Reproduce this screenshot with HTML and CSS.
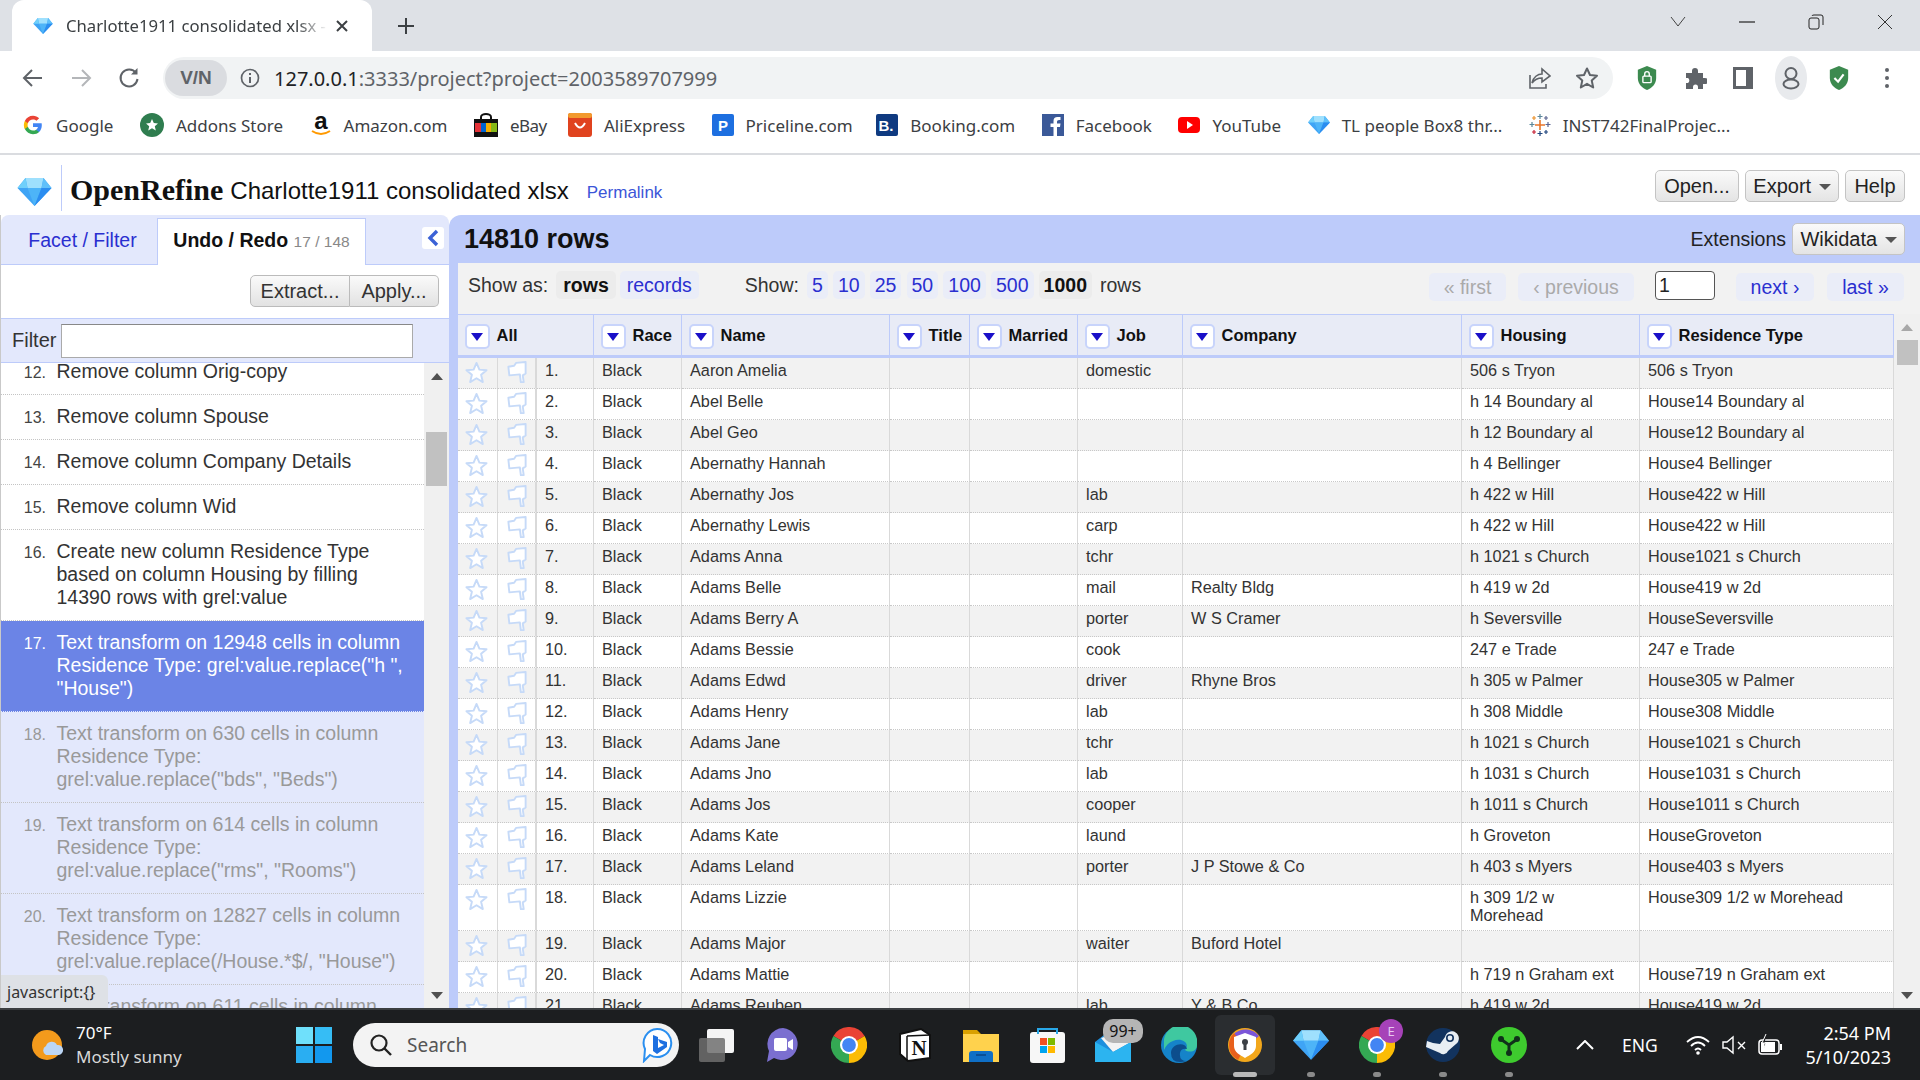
FILE: index.html
```html
<!DOCTYPE html>
<html lang="en">
<head>
<meta charset="utf-8">
<title>Charlotte1911 consolidated xlsx - OpenRefine</title>
<link rel="stylesheet" href="styles.css">
</head>
<body>
<svg class="defs" width="0" height="0" aria-hidden="true">
  <symbol id="gem" viewBox="0 0 34 28">
    <polygon points="0,10 8,0 26,0 34,10 17,28" fill="#3fa4f5"/>
    <polygon points="8,0 26,0 24,10 10,10" fill="#9fe0fd"/>
    <polygon points="0,10 8,0 10,10" fill="#6fd0fb"/>
    <polygon points="34,10 26,0 24,10" fill="#5fc0fa"/>
    <polygon points="10,10 24,10 17,28" fill="#4db4f8"/>
    <polygon points="24,10 34,10 17,28" fill="#2b8df0"/>
  </symbol>
  <symbol id="star" viewBox="0 0 24 24">
    <polygon points="12,2 15,9 22.5,9.6 16.8,14.4 18.6,22 12,18 5.4,22 7.2,14.4 1.5,9.6 9,9" fill="#fff" stroke="#c6daf8" stroke-width="2" stroke-linejoin="round"/>
  </symbol>
  <symbol id="flag" viewBox="0 0 22 24">
    <path d="M2 6 L8 5 L10 2 L20 1 L20 13 L17 15 L18 22 L15 22 L14 14 L3 15 Z" fill="#fff" stroke="#c6daf8" stroke-width="2" stroke-linejoin="round"/>
  </symbol>
  <symbol id="chrome" viewBox="0 0 24 24">
    <path d="M12 12 L1.6 6 A12 12 0 0 1 22.4 6 Z" fill="#ea4335"/>
    <path d="M12 12 L1.6 6 A12 12 0 0 0 12 24 Z" fill="#34a853"/>
    <path d="M12 12 L22.4 6 A12 12 0 0 1 12 24 Z" fill="#fbbc05"/>
    <circle cx="12" cy="12" r="6" fill="#fff"/><circle cx="12" cy="12" r="4.6" fill="#4285f4"/>
  </symbol>
  <symbol id="shield" viewBox="0 0 24 28">
    <path d="M12 1 L22 5 V14 C22 21 17 25 12 27 C7 25 2 21 2 14 V5 Z" fill="#3c8a4f"/>
  </symbol>
</svg>

<div class="window">
  <header class="tabstrip">
    <div class="tab">
      <svg class="tab-gem" width="20" height="16"><use href="#gem"/></svg>
      <span class="tab-title">Charlotte1911 consolidated xlsx -</span>
      <svg class="tab-x" width="12" height="12" viewBox="0 0 12 12"><path d="M1 1 L11 11 M11 1 L1 11" stroke="#3c4043" stroke-width="2"/></svg>
    </div>
    <svg class="tab-plus" width="18" height="18" viewBox="0 0 18 18"><path d="M9 1 V17 M1 9 H17" stroke="#3c4043" stroke-width="2"/></svg>
    <div class="win-controls">
      <svg width="16" height="12" viewBox="0 0 16 12"><path d="M1 1 L8 10 L15 1" fill="none" stroke="#444" stroke-width="1"/></svg>
      <svg width="16" height="2" viewBox="0 0 16 2"><path d="M0 1 H16" stroke="#222" stroke-width="1.2"/></svg>
      <svg width="16" height="16" viewBox="0 0 16 16"><rect x="1" y="4" width="10" height="11" rx="2" fill="none" stroke="#222"/><path d="M4 2 Q4 1 6 1 H13 Q15 1 15 3 V11" fill="none" stroke="#222"/></svg>
      <svg width="16" height="16" viewBox="0 0 16 16"><path d="M1 1 L15 15 M15 1 L1 15" stroke="#333" stroke-width="1"/></svg>
    </div>
  </header>

  <nav class="toolbar">
    <svg class="nav-ico" width="22" height="20" viewBox="0 0 22 20"><path d="M20 10 H3 M10 2 L2 10 L10 18" fill="none" stroke="#5f6368" stroke-width="2"/></svg>
    <svg class="nav-ico" width="22" height="20" viewBox="0 0 22 20"><path d="M2 10 H19 M12 2 L20 10 L12 18" fill="none" stroke="#b4b6b9" stroke-width="2"/></svg>
    <svg class="nav-ico" width="22" height="22" viewBox="0 0 22 22"><path d="M18 6 A8.5 8.5 0 1 0 19.5 12" fill="none" stroke="#5f6368" stroke-width="2"/><path d="M19.5 1 V7.5 H13 Z" fill="#5f6368"/></svg>
    <div class="omnibox">
      <span class="vpn">V/N</span>
      <svg class="info" width="20" height="20" viewBox="0 0 20 20"><circle cx="10" cy="10" r="8.5" fill="none" stroke="#5f6368" stroke-width="1.7"/><path d="M10 9 V15 M10 5 V7" stroke="#5f6368" stroke-width="2"/></svg>
      <span class="url"><b class="url-host">127.0.0.1</b>:3333/project?project=2003589707999</span>
      <svg class="omni-ico" width="24" height="24" viewBox="0 0 24 24"><path d="M3 9 V22 H19 V18 M5 17 C6 11 11 8 15 8 V3 L23 10 L15 16 V12 C11 12 8 13 5 17 Z" fill="none" stroke="#5f6368" stroke-width="1.6"/></svg>
      <svg class="omni-ico" width="24" height="24" viewBox="0 0 24 24"><polygon points="12,2.5 15,9 22,9.7 16.7,14.4 18.2,21.5 12,17.8 5.8,21.5 7.3,14.4 2,9.7 9,9" fill="none" stroke="#5f6368" stroke-width="2" stroke-linejoin="round"/></svg>
    </div>
    <div class="ext-icons">
      <svg width="22" height="26" viewBox="0 0 24 28"><use href="#shield"/><rect x="7.5" y="12" width="9" height="7" rx="1" fill="none" stroke="#fff" stroke-width="1.5"/><path d="M9.5 12 V9.5 A2.5 2.5 0 0 1 14.5 9.5 V12" fill="none" stroke="#fff" stroke-width="1.5"/></svg>
      <svg width="22" height="24" viewBox="0 0 22 24"><path d="M1 7 H7 V5 A3 3 0 0 1 13 5 V7 H18 V12 H20 A3 3 0 0 1 20 18 H18 V23 H13 V21 A2.5 2.5 0 0 0 8 21 V23 H1 V17 H3 A3 3 0 0 0 3 12 H1 Z" fill="#5f6368"/></svg>
      <svg width="20" height="22" viewBox="0 0 20 22"><rect x="1.5" y="1.5" width="17" height="19" fill="none" stroke="#5f6368" stroke-width="3"/><rect x="13" y="1.5" width="5.5" height="19" fill="#5f6368"/></svg>
      <span class="profile"><svg width="18" height="24" viewBox="0 0 18 24"><circle cx="9" cy="7.5" r="5.5" fill="none" stroke="#5f6368" stroke-width="2"/><ellipse cx="9" cy="18" rx="7.5" ry="4.5" fill="none" stroke="#5f6368" stroke-width="2"/></svg></span>
      <svg width="22" height="26" viewBox="0 0 24 28"><use href="#shield"/><path d="M7 14 L11 18 L17 10" fill="none" stroke="#fff" stroke-width="2.4"/></svg>
      <svg class="dots" width="8" height="24" viewBox="0 0 8 24"><circle cx="4" cy="4" r="2" fill="#5f6368"/><circle cx="4" cy="12" r="2" fill="#5f6368"/><circle cx="4" cy="20" r="2" fill="#5f6368"/></svg>
    </div>
  </nav>

  <div class="bookmarks">
    <a class="bm bm-google"><svg width="20" height="20" viewBox="0 0 24 24"><path fill="#4285F4" d="M22.56 12.25c0-.78-.07-1.53-.2-2.25H12v4.26h5.92c-.26 1.37-1.04 2.53-2.21 3.31v2.77h3.57c2.08-1.92 3.28-4.74 3.28-8.09z"/><path fill="#34A853" d="M12 23c2.97 0 5.46-.98 7.28-2.66l-3.57-2.77c-.98.66-2.23 1.06-3.71 1.06-2.86 0-5.29-1.93-6.16-4.53H2.18v2.84C3.99 20.53 7.7 23 12 23z"/><path fill="#FBBC05" d="M5.84 14.09c-.22-.66-.35-1.36-.35-2.09s.13-1.43.35-2.09V7.07H2.18C1.43 8.55 1 10.22 1 12s.43 3.45 1.18 4.93l2.85-2.22.81-.62z"/><path fill="#EA4335" d="M12 5.38c1.62 0 3.06.56 4.21 1.64l3.15-3.15C17.45 2.09 14.97 1 12 1 7.7 1 3.99 3.47 2.18 7.07l3.66 2.84c.87-2.6 3.3-4.53 6.16-4.53z"/></svg>Google</a>
    <a class="bm"><svg width="24" height="24" viewBox="0 0 24 24"><circle cx="12" cy="12" r="12" fill="#2f7d4f"/><polygon points="12,6 13.8,10 18,10.4 14.8,13.2 15.8,17.5 12,15.2 8.2,17.5 9.2,13.2 6,10.4 10.2,10" fill="#fff"/></svg>Addons Store</a>
    <a class="bm"><svg width="22" height="24" viewBox="0 0 22 24"><text x="11" y="16" text-anchor="middle" class="amz">a</text><path d="M2 18 Q11 24 20 18" fill="none" stroke="#f90" stroke-width="2"/></svg>Amazon.com</a>
    <a class="bm bm-ebay"><svg width="24" height="24" viewBox="0 0 24 24"><path d="M7 7 V4 A5 3 0 0 1 17 4 V7" fill="none" stroke="#111" stroke-width="2"/><rect y="6" width="24" height="18" fill="#111"/><rect x="1" y="10" width="6" height="9" fill="#e53238"/><rect x="7" y="10" width="5" height="9" fill="#0064d2"/><rect x="12" y="10" width="5" height="9" fill="#f5af02"/><rect x="17" y="10" width="6" height="9" fill="#86b817"/></svg>eBay</a>
    <a class="bm"><svg width="24" height="24" viewBox="0 0 24 24"><rect width="24" height="24" rx="3" fill="#e0431f"/><rect width="24" height="5" rx="2" fill="#f29a2e"/><path d="M7 10 Q12 19 17 10" fill="none" stroke="#fff" stroke-width="2"/></svg>AliExpress</a>
    <a class="bm bm-price"><svg width="22" height="22" viewBox="0 0 22 22"><rect width="22" height="22" rx="2" fill="#1d6fe0"/><text x="11" y="17" text-anchor="middle" class="bm-letter">P</text></svg>Priceline.com</a>
    <a class="bm"><svg width="22" height="22" viewBox="0 0 22 22"><rect width="22" height="22" rx="2" fill="#0f3a80"/><text x="10" y="17" text-anchor="middle" class="bm-letter">B.</text></svg>Booking.com</a>
    <a class="bm"><svg width="22" height="22" viewBox="0 0 22 22"><rect width="22" height="22" fill="#3b5998"/><path d="M15 22 V13 H18 L18.5 9.5 H15 V7.5 Q15 6 17 6 H18.5 V3 H15.5 Q11.5 3 11.5 7 V9.5 H8.5 V13 H11.5 V22 Z" fill="#fff"/></svg>Facebook</a>
    <a class="bm"><svg width="22" height="16" viewBox="0 0 22 16"><rect width="22" height="16" rx="4" fill="#f00"/><polygon points="9,4 15,8 9,12" fill="#fff"/></svg>YouTube</a>
    <a class="bm"><svg width="22" height="18"><use href="#gem"/></svg>TL people Box8 thr...</a>
    <a class="bm"><svg width="22" height="22" viewBox="0 0 22 22"><path d="M11 6 V16 M6 11 H16" stroke="#e8762b" stroke-width="1.6"/><path d="M11 0 V5 M8.5 2.5 H13.5" stroke="#5b879b" stroke-width="1.2"/><path d="M11 17 V22 M8.5 19.5 H13.5" stroke="#1f457e" stroke-width="1.2"/><path d="M3 8 V13 M.5 10.5 H5.5" stroke="#59879b" stroke-width="1.2"/><path d="M19 8 V13 M16.5 10.5 H21.5" stroke="#5b6591" stroke-width="1.2"/><path d="M5 2 V6 M3 4 H7" stroke="#eb912b" stroke-width="1.2"/><path d="M17 2 V6 M15 4 H19" stroke="#5b6591" stroke-width="1.2"/><path d="M5 16 V20 M3 18 H7" stroke="#c72035" stroke-width="1.2"/><path d="M17 16 V20 M15 18 H19" stroke="#1f457e" stroke-width="1.2"/></svg>INST742FinalProjec...</a>
  </div>

  <div class="app-header">
    <svg class="logo" width="35" height="28"><use href="#gem"/></svg>
    <h1 class="brand">OpenRefine</h1>
    <span class="project-name">Charlotte1911 consolidated xlsx</span>
    <a class="permalink">Permalink</a>
    <div class="app-actions">
      <button class="btn btn-open">Open...</button>
      <button class="btn btn-export">Export <i class="caret"></i></button>
      <button class="btn btn-help">Help</button>
    </div>
  </div>

  <main class="workspace">
    <aside class="left">
      <div class="left-tabs">
        <a class="tab-link">Facet / Filter</a>
        <a class="tab-active">Undo / Redo <small>17 / 148</small></a>
        <span class="collapse"><svg width="12" height="18" viewBox="0 0 12 18"><path d="M10 2 L3 9 L10 16" fill="none" stroke="#3b62d6" stroke-width="3.4"/></svg></span>
      </div>
      <div class="left-actions">
        <div class="btn-group"><button class="btn-g">Extract...</button><button class="btn-g">Apply...</button></div>
      </div>
      <div class="filter-row"><label class="filter-label">Filter</label><input class="filter-input" type="text"></div>
      <div class="history-wrap">
        <ol class="history">
          <li class="h"><span class="n">12.</span><span class="t">Remove column Orig-copy</span></li>
          <li class="h"><span class="n">13.</span><span class="t">Remove column Spouse</span></li>
          <li class="h"><span class="n">14.</span><span class="t">Remove column Company Details</span></li>
          <li class="h"><span class="n">15.</span><span class="t">Remove column Wid</span></li>
          <li class="h"><span class="n">16.</span><span class="t">Create new column Residence Type based on column Housing by filling 14390 rows with grel:value</span></li>
          <li class="h h-now"><span class="n">17.</span><span class="t">Text transform on 12948 cells in column Residence Type: grel:value.replace("h ", "House")</span></li>
          <li class="h h-redo"><span class="n">18.</span><span class="t">Text transform on 630 cells in column Residence Type: grel:value.replace("bds", "Beds")</span></li>
          <li class="h h-redo"><span class="n">19.</span><span class="t">Text transform on 614 cells in column Residence Type: grel:value.replace("rms", "Rooms")</span></li>
          <li class="h h-redo"><span class="n">20.</span><span class="t">Text transform on 12827 cells in column Residence Type: grel:value.replace(/House.*$/, "House")</span></li>
          <li class="h h-redo"><span class="n">21.</span><span class="t">Text transform on 611 cells in column Residence Type</span></li>
        </ol>
        <div class="vscroll vscroll-left"><i class="arrow-up"></i><i class="thumb thumb-left"></i><i class="arrow-down"></i></div>
      </div>
      <div class="status-bubble">javascript:{}</div>
    </aside>

    <section class="right">
      <div class="summary">
        <h2 class="rows-count">14810 rows</h2>
        <span class="ext-label">Extensions</span>
        <button class="btn btn-wiki">Wikidata <i class="caret"></i></button>
      </div>
      <div class="content">
        <div class="controls">
          <span class="ctl-label">Show as:</span>
          <span class="pill pill-on">rows</span>
          <a class="pill">records</a>
          <span class="ctl-label ctl-show">Show:</span>
          <a class="pill pill-n">5</a><a class="pill pill-n">10</a><a class="pill pill-n">25</a><a class="pill pill-n">50</a><a class="pill pill-n">100</a><a class="pill pill-n">500</a><span class="pill pill-n pill-on">1000</span>
          <span class="ctl-label ctl-rows">rows</span>
          <a class="page page-off page-first">« first</a>
          <a class="page page-off page-prev">‹ previous</a>
          <input class="page-input" type="text" value="1">
          <a class="page page-next">next ›</a>
          <a class="page page-last">last »</a>
        </div>
        <div class="grid-wrap">
          <table class="grid">
            <colgroup><col class="c-star"><col class="c-flag"><col class="c-num"><col class="c-race"><col class="c-name"><col class="c-title"><col class="c-mar"><col class="c-job"><col class="c-co"><col class="c-hou"><col class="c-res"></colgroup>
            <thead><tr>
              <th colspan="3"><i class="dd"></i>All</th>
              <th><i class="dd"></i>Race</th><th><i class="dd"></i>Name</th><th><i class="dd"></i>Title</th><th><i class="dd"></i>Married</th><th><i class="dd"></i>Job</th><th><i class="dd"></i>Company</th><th><i class="dd"></i>Housing</th><th><i class="dd"></i>Residence Type</th>
            </tr></thead>
            <tbody>
              <tr><td class="ic"><svg class="star"><use href="#star"/></svg></td><td class="ic ic2"><svg class="flag"><use href="#flag"/></svg></td><td>1.</td><td>Black</td><td>Aaron Amelia</td><td></td><td></td><td>domestic</td><td></td><td class="hou">506 s Tryon</td><td>506 s Tryon</td></tr>
              <tr><td class="ic"><svg class="star"><use href="#star"/></svg></td><td class="ic ic2"><svg class="flag"><use href="#flag"/></svg></td><td>2.</td><td>Black</td><td>Abel Belle</td><td></td><td></td><td></td><td></td><td class="hou">h 14 Boundary al</td><td>House14 Boundary al</td></tr>
              <tr><td class="ic"><svg class="star"><use href="#star"/></svg></td><td class="ic ic2"><svg class="flag"><use href="#flag"/></svg></td><td>3.</td><td>Black</td><td>Abel Geo</td><td></td><td></td><td></td><td></td><td class="hou">h 12 Boundary al</td><td>House12 Boundary al</td></tr>
              <tr><td class="ic"><svg class="star"><use href="#star"/></svg></td><td class="ic ic2"><svg class="flag"><use href="#flag"/></svg></td><td>4.</td><td>Black</td><td>Abernathy Hannah</td><td></td><td></td><td></td><td></td><td class="hou">h 4 Bellinger</td><td>House4 Bellinger</td></tr>
              <tr><td class="ic"><svg class="star"><use href="#star"/></svg></td><td class="ic ic2"><svg class="flag"><use href="#flag"/></svg></td><td>5.</td><td>Black</td><td>Abernathy Jos</td><td></td><td></td><td>lab</td><td></td><td class="hou">h 422 w Hill</td><td>House422 w Hill</td></tr>
              <tr><td class="ic"><svg class="star"><use href="#star"/></svg></td><td class="ic ic2"><svg class="flag"><use href="#flag"/></svg></td><td>6.</td><td>Black</td><td>Abernathy Lewis</td><td></td><td></td><td>carp</td><td></td><td class="hou">h 422 w Hill</td><td>House422 w Hill</td></tr>
              <tr><td class="ic"><svg class="star"><use href="#star"/></svg></td><td class="ic ic2"><svg class="flag"><use href="#flag"/></svg></td><td>7.</td><td>Black</td><td>Adams Anna</td><td></td><td></td><td>tchr</td><td></td><td class="hou">h 1021 s Church</td><td>House1021 s Church</td></tr>
              <tr><td class="ic"><svg class="star"><use href="#star"/></svg></td><td class="ic ic2"><svg class="flag"><use href="#flag"/></svg></td><td>8.</td><td>Black</td><td>Adams Belle</td><td></td><td></td><td>mail</td><td>Realty Bldg</td><td class="hou">h 419 w 2d</td><td>House419 w 2d</td></tr>
              <tr><td class="ic"><svg class="star"><use href="#star"/></svg></td><td class="ic ic2"><svg class="flag"><use href="#flag"/></svg></td><td>9.</td><td>Black</td><td>Adams Berry A</td><td></td><td></td><td>porter</td><td>W S Cramer</td><td class="hou">h Seversville</td><td>HouseSeversville</td></tr>
              <tr><td class="ic"><svg class="star"><use href="#star"/></svg></td><td class="ic ic2"><svg class="flag"><use href="#flag"/></svg></td><td>10.</td><td>Black</td><td>Adams Bessie</td><td></td><td></td><td>cook</td><td></td><td class="hou">247 e Trade</td><td>247 e Trade</td></tr>
              <tr><td class="ic"><svg class="star"><use href="#star"/></svg></td><td class="ic ic2"><svg class="flag"><use href="#flag"/></svg></td><td>11.</td><td>Black</td><td>Adams Edwd</td><td></td><td></td><td>driver</td><td>Rhyne Bros</td><td class="hou">h 305 w Palmer</td><td>House305 w Palmer</td></tr>
              <tr><td class="ic"><svg class="star"><use href="#star"/></svg></td><td class="ic ic2"><svg class="flag"><use href="#flag"/></svg></td><td>12.</td><td>Black</td><td>Adams Henry</td><td></td><td></td><td>lab</td><td></td><td class="hou">h 308 Middle</td><td>House308 Middle</td></tr>
              <tr><td class="ic"><svg class="star"><use href="#star"/></svg></td><td class="ic ic2"><svg class="flag"><use href="#flag"/></svg></td><td>13.</td><td>Black</td><td>Adams Jane</td><td></td><td></td><td>tchr</td><td></td><td class="hou">h 1021 s Church</td><td>House1021 s Church</td></tr>
              <tr><td class="ic"><svg class="star"><use href="#star"/></svg></td><td class="ic ic2"><svg class="flag"><use href="#flag"/></svg></td><td>14.</td><td>Black</td><td>Adams Jno</td><td></td><td></td><td>lab</td><td></td><td class="hou">h 1031 s Church</td><td>House1031 s Church</td></tr>
              <tr><td class="ic"><svg class="star"><use href="#star"/></svg></td><td class="ic ic2"><svg class="flag"><use href="#flag"/></svg></td><td>15.</td><td>Black</td><td>Adams Jos</td><td></td><td></td><td>cooper</td><td></td><td class="hou">h 1011 s Church</td><td>House1011 s Church</td></tr>
              <tr><td class="ic"><svg class="star"><use href="#star"/></svg></td><td class="ic ic2"><svg class="flag"><use href="#flag"/></svg></td><td>16.</td><td>Black</td><td>Adams Kate</td><td></td><td></td><td>laund</td><td></td><td class="hou">h Groveton</td><td>HouseGroveton</td></tr>
              <tr><td class="ic"><svg class="star"><use href="#star"/></svg></td><td class="ic ic2"><svg class="flag"><use href="#flag"/></svg></td><td>17.</td><td>Black</td><td>Adams Leland</td><td></td><td></td><td>porter</td><td>J P Stowe &amp; Co</td><td class="hou">h 403 s Myers</td><td>House403 s Myers</td></tr>
              <tr><td class="ic"><svg class="star"><use href="#star"/></svg></td><td class="ic ic2"><svg class="flag"><use href="#flag"/></svg></td><td>18.</td><td>Black</td><td>Adams Lizzie</td><td></td><td></td><td></td><td></td><td class="hou">h 309 1/2 w Morehead</td><td>House309 1/2 w Morehead</td></tr>
              <tr><td class="ic"><svg class="star"><use href="#star"/></svg></td><td class="ic ic2"><svg class="flag"><use href="#flag"/></svg></td><td>19.</td><td>Black</td><td>Adams Major</td><td></td><td></td><td>waiter</td><td>Buford Hotel</td><td class="hou"></td><td></td></tr>
              <tr><td class="ic"><svg class="star"><use href="#star"/></svg></td><td class="ic ic2"><svg class="flag"><use href="#flag"/></svg></td><td>20.</td><td>Black</td><td>Adams Mattie</td><td></td><td></td><td></td><td></td><td class="hou">h 719 n Graham ext</td><td>House719 n Graham ext</td></tr>
              <tr><td class="ic"><svg class="star"><use href="#star"/></svg></td><td class="ic ic2"><svg class="flag"><use href="#flag"/></svg></td><td>21.</td><td>Black</td><td>Adams Reuben</td><td></td><td></td><td>lab</td><td>Y &amp; B Co</td><td class="hou">h 419 w 2d</td><td>House419 w 2d</td></tr>
            </tbody>
          </table>
          <div class="vscroll vscroll-right"><i class="arrow-up arrow-light"></i><i class="thumb thumb-right"></i><i class="arrow-down"></i></div>
        </div>
      </div>
    </section>
  </main>

  <footer class="taskbar">
    <div class="weather">
      <svg width="32" height="32" viewBox="0 0 32 32"><circle cx="15" cy="16" r="15" fill="#f39a1c"/><path d="M14 26 A5 5 0 0 1 14 17 A6 6 0 0 1 25 16 A5 5 0 0 1 27 26 Z" fill="#bcd6f5"/></svg>
      <div class="weather-text"><span class="temp">70°F</span><span class="cond">Mostly sunny</span></div>
    </div>
    <svg class="start" width="36" height="36" viewBox="0 0 36 36"><rect width="17" height="17" fill="#6fe0fb"/><rect x="19" width="17" height="17" fill="#36bdf5"/><rect y="19" width="17" height="17" fill="#2aaef2"/><rect x="19" y="19" width="17" height="17" fill="#1298ee"/></svg>
    <div class="search">
      <svg width="24" height="24" viewBox="0 0 24 24"><circle cx="10" cy="10" r="7.5" fill="none" stroke="#222" stroke-width="2.2"/><path d="M15.5 15.5 L22 22" stroke="#222" stroke-width="2.4"/></svg>
      <span class="search-text">Search</span>
      <svg class="bing" width="32" height="36" viewBox="0 0 32 36"><path d="M16 2 A14 14 0 1 1 9 28 L3 34 L4 22 A14 14 0 0 1 16 2 Z" fill="#fff" stroke="#2a8ff0" stroke-width="2"/><path d="M12 8 L17 10 V21 L23 18 L19 16 L17 12 L26 15 V20 L16 27 L12 24 Z" fill="#1d6fe0"/></svg>
    </div>
    <div class="tb-apps">
      <div class="tb"><svg width="36" height="34" viewBox="0 0 36 34"><rect x="8" y="1" width="27" height="24" rx="2" fill="#f5f5f5"/><rect y="10" width="26" height="24" rx="2" fill="#6f6f6f" fill-opacity=".85"/></svg></div>
      <div class="tb"><svg width="34" height="36" viewBox="0 0 34 36"><path d="M17 1 A16 16 0 1 1 8 31 L1 35 L3 24 A16 16 0 0 1 17 1 Z" fill="#7b6fd0"/><rect x="8" y="11" width="13" height="13" rx="2" fill="#fff"/><path d="M22 15 L27 12 V23 L22 20 Z" fill="#fff"/></svg></div>
      <div class="tb"><svg width="36" height="36"><use href="#chrome"/></svg></div>
      <div class="tb"><svg width="32" height="34" viewBox="0 0 32 34"><path d="M1 6 L22 1 L31 7 V30 L9 33 L1 26 Z" fill="#fff" stroke="#111" stroke-width="2"/><path d="M8 8 L31 7 M8 8 V33" stroke="#111" stroke-width="1.5"/><text x="20" y="27" text-anchor="middle" class="notion-n">N</text></svg></div>
      <div class="tb"><svg width="36" height="34" viewBox="0 0 36 34"><path d="M0 2 H14 L18 6 H36 V34 H0 Z" fill="#d9a000"/><rect y="6" width="36" height="28" fill="#ffd24d"/><path d="M6 34 V26 Q6 23 9 23 H27 Q30 23 30 26 V34 Z" fill="#0f6fc6"/><rect x="13" y="26" width="10" height="2" fill="#0a4f96"/></svg></div>
      <div class="tb"><svg width="35" height="36" viewBox="0 0 35 36"><rect y="5" width="35" height="31" rx="3" fill="#f7f7f7"/><path d="M8 7 V2 H27 V7" fill="none" stroke="#29a8e8" stroke-width="2"/><rect x="10" y="11" width="7" height="7" fill="#f25022"/><rect x="18" y="11" width="7" height="7" fill="#7fba00"/><rect x="10" y="19" width="7" height="7" fill="#00a4ef"/><rect x="18" y="19" width="7" height="7" fill="#ffb900"/></svg></div>
      <div class="tb"><svg width="36" height="34" viewBox="0 0 36 34"><path d="M0 14 L18 0 L36 14 V34 H0 Z" fill="#1b8fde"/><path d="M6 10 L30 2 L36 14 L18 24 Z" fill="#f3f3f3"/><path d="M0 14 L18 24 L36 14 V34 H0 Z" fill="#2cb4f0"/></svg><span class="badge">99+</span></div>
      <div class="tb"><svg width="36" height="36" viewBox="0 0 36 36"><circle cx="18" cy="18" r="18" fill="#1583c9"/><path d="M3 12 A16 16 0 0 1 36 18 C36 25 28 26 24 23 C30 16 20 10 12 14 Q6 16 3 23 Z" fill="#3fc8a0"/><path d="M10 26 C10 17 24 14 26 22 Q20 21 19 26 Q18 34 26 34 Q10 38 10 26 Z" fill="#0c4d8c"/></svg></div>
      <div class="tb tb-active"><svg width="34" height="36" viewBox="0 0 34 36"><circle cx="17" cy="18" r="17" fill="#f2a71b"/><path d="M5 8 A17 17 0 0 1 31 9 L17 20 Z" fill="#7a55d8"/><path d="M1 18 A17 17 0 0 1 6 6 L17 20 L10 33 A17 17 0 0 1 1 18 Z" fill="#e8601c"/><path d="M17 6 L28 10 V19 C28 25 22 28 17 31 C12 28 6 25 6 19 V10 Z" fill="#fff"/><circle cx="17" cy="15" r="3" fill="#3b3f45"/><rect x="15.5" y="16" width="3" height="7" fill="#3b3f45"/></svg></div>
      <div class="tb tb-run"><svg width="36" height="30"><use href="#gem"/></svg></div>
      <div class="tb tb-run"><svg width="36" height="36"><use href="#chrome"/></svg><span class="e-badge">E</span></div>
      <div class="tb tb-run"><svg width="34" height="36" viewBox="0 0 34 36"><circle cx="17" cy="18" r="17" fill="#12335e"/><path d="M0 20 L14 26 A5 5 0 0 0 22 24 L30 17 A7 7 0 1 0 19 10 L14 17 Q8 17 1 14 Z" fill="#e8eef3"/><circle cx="24" cy="11" r="4" fill="#12335e"/><circle cx="24" cy="11" r="2.4" fill="#e8eef3"/></svg></div>
      <div class="tb tb-run"><svg width="36" height="36" viewBox="0 0 36 36"><circle cx="18" cy="18" r="18" fill="#3ecb2e"/><path d="M11 13 L18 18 L25 13 M18 18 V25" stroke="#10311a" stroke-width="3" fill="none"/><circle cx="10" cy="12" r="3" fill="#10311a"/><circle cx="26" cy="12" r="3" fill="#10311a"/><circle cx="18" cy="26" r="3" fill="#10311a"/></svg></div>
    </div>
    <div class="tray">
      <svg class="tray-caret" width="18" height="10" viewBox="0 0 18 10"><path d="M1 9 L9 1 L17 9" fill="none" stroke="#fff" stroke-width="2"/></svg>
      <span class="eng">ENG</span>
      <svg width="24" height="20" viewBox="0 0 24 20"><path d="M1 7 Q12 -3 23 7 M5 11 Q12 4 19 11 M9 15 Q12 12 15 15" fill="none" stroke="#fff" stroke-width="1.8"/><circle cx="12" cy="18" r="1.8" fill="#fff"/></svg>
      <svg width="24" height="20" viewBox="0 0 24 20"><path d="M1 7 H5 L11 2 V18 L5 13 H1 Z" fill="none" stroke="#fff" stroke-width="1.4"/><path d="M16 7 L23 14 M23 7 L16 14" stroke="#fff" stroke-width="1.4"/></svg>
      <svg width="25" height="22" viewBox="0 0 25 22"><rect x="1" y="6" width="20" height="14" rx="3" fill="none" stroke="#fff" stroke-width="1.5"/><rect x="3" y="8" width="14" height="10" fill="#fff"/><rect x="22" y="10" width="2" height="6" fill="#fff"/><path d="M8 0 L4 9 H8 L6 14" fill="#1c1e20" stroke="#fff"/></svg>
      <div class="clock"><span>2:54 PM</span><span>5/10/2023</span></div>
    </div>
  </footer>
</div>
</body>
</html>
```
FILE: styles.css
```css
* { box-sizing: border-box; }
html, body { margin: 0; padding: 0; height: 100%; overflow: hidden; }
body { font-family: "Liberation Sans", Arial, sans-serif; color: #222; background: #fff; }
.defs { position: absolute; }
.window { width: 1920px; height: 1080px; display: flex; flex-direction: column; overflow: hidden; }

/* browser chrome */
.tabstrip { height: 51px; background: #dee1e6; display: flex; align-items: flex-end; flex: none; padding-left: 12px; }
.tab { width: 360px; height: 51px; background: #fff; border-radius: 12px 12px 0 0; display: flex; align-items: center; padding: 0 18px 0 21px; }
.tab-gem { flex: none; margin-top: 1px; }
.tab-title { font: 16.7px "Noto Sans", sans-serif; color: #3c4043; margin-left: 13px; width: 262px; white-space: nowrap; overflow: hidden; -webkit-mask-image: linear-gradient(90deg, #000 88%, transparent 100%); mask-image: linear-gradient(90deg, #000 88%, transparent 100%); }
.tab-x { margin-left: 8px; flex: none; }
.tab-plus { margin: 0 0 16px 25px; }
.win-controls { margin-left: auto; height: 51px; display: flex; align-items: center; gap: 53px; padding-right: 27px; padding-bottom: 8px; }
.toolbar { height: 48px; flex: none; background: #fff; display: flex; align-items: center; padding: 6px 0 0 22px; position: relative; }
.nav-ico { margin-right: 26px; flex: none; }
.omnibox { width: 1450px; margin-left: -3px; height: 42px; background: #f1f3f4; border-radius: 21px; display: flex; align-items: center; padding: 0 14px 0 2px; flex: none; }
.vpn { width: 62px; height: 36px; border-radius: 18px; background: #dadce0; color: #5f6368; font: bold 19px "Liberation Sans", sans-serif; display: flex; align-items: center; justify-content: center; }
.info { margin-left: 13px; flex: none; }
.url { font: 20px "Noto Sans", sans-serif; color: #5f6368; margin-left: 14px; flex: 1; white-space: nowrap; }
.url-host { font-weight: 400; color: #202124; }
.omni-ico { margin-left: 24px; flex: none; }
.ext-icons { margin-left: 23px; display: flex; align-items: center; gap: 26.5px; }
.dots { margin-left: 6px; }
.profile { width: 32px; height: 44px; border-radius: 50%; background: #e8eaed; display: flex; align-items: center; justify-content: center; margin: 0 -5px; }
.bookmarks { height: 56px; flex: none; background: #fff; border-bottom: 2px solid #dadce0; display: flex; align-items: center; padding: 0 0 2px 23px; gap: 26.5px; font: 17px "Noto Sans", sans-serif; color: #3c4043; }
.bm { display: flex; align-items: center; gap: 12px; white-space: nowrap; }
.bm svg { flex: none; }
.bm-google { gap: 13px; }
.bm-ebay { letter-spacing: -.6px; margin-right: -5px; }
.bm-price { margin-right: -3px; }
.amz { font: bold 24px "Liberation Sans", sans-serif; fill: #111; }
.bm-letter { font: bold 15px "Liberation Sans", sans-serif; fill: #fff; }

/* app header */
.app-header { height: 60px; flex: none; display: flex; align-items: center; padding: 10px 0 0 17px; background: #fff; }
.logo { flex: none; margin-top: 4px; }
.brand { font: bold 30px "Liberation Serif", serif; color: #111; margin: 0 0 0 18px; position: relative; }
.brand::before { content: ""; position: absolute; left: -9px; top: -8px; bottom: -4px; width: 1px; background: #bdcbfa; }
.project-name { font-size: 24px; margin-left: 7px; color: #111; margin-top: 2px; }
.permalink { font-size: 17px; color: #3b55d8; margin-left: 18px; margin-top: 5px; }
.app-actions { margin-left: auto; display: flex; gap: 6px; padding: 0 15px 8px 0; }
.btn { height: 32px; padding: 0; border: 1px solid #c4c4c4; border-radius: 5px; background: linear-gradient(#fafafa, #e4e4e4); font: 20px "Liberation Sans", sans-serif; color: #222; }
.btn-open { width: 84px; }
.btn-export { width: 94px; }
.btn-help { width: 60px; }
.btn-wiki { width: 113px; }
.caret { display: inline-block; border: 6px solid transparent; border-top: 6px solid #555; border-bottom: 0; vertical-align: middle; margin-left: 2px; }

/* workspace */
.workspace { flex: 1; min-height: 0; display: flex; }
.left { width: 449px; flex: none; display: flex; flex-direction: column; position: relative; border-left: 1px solid #c9c9c9; overflow: hidden; }
.left-tabs { height: 50px; flex: none; background: #e3e8fc; border-bottom: 1px solid #bdcbfa; display: flex; align-items: flex-end; padding-top: 3px; border-radius: 8px 8px 0 0; position: relative; font-size: 19.5px; }
.tab-link { width: 156px; height: 46px; color: #2a2fd0; display: flex; align-items: center; justify-content: center; padding: 0 0 2px 7px; }
.tab-active { width: 209px; height: 47px; background: #fff; border: 1px solid #bdcbfa; border-bottom: 0; font-weight: bold; color: #111; display: flex; align-items: center; justify-content: center; white-space: pre; margin-bottom: -1px; padding-bottom: 3px; }
.tab-active small { font-size: 15.5px; font-weight: normal; color: #888; margin-top: 3px; }
.collapse { position: absolute; right: 5px; top: 12px; width: 22px; height: 22px; background: #fff; border-radius: 3px; display: flex; align-items: center; justify-content: center; }
.left-actions { height: 54px; flex: none; background: #fff; border-bottom: 1px solid #bdcbfa; display: flex; justify-content: flex-end; padding: 10px 10px 0 0; }
.btn-group { display: flex; height: 32px; }
.btn-g { height: 32px; padding: 0; border: 1px solid #bbb; background: linear-gradient(#fafafa, #e2e2e2); font: 20px "Liberation Sans", sans-serif; color: #333; }
.btn-g:first-child { width: 100px; border-radius: 5px 0 0 5px; }
.btn-g:last-child { width: 89px; border-radius: 0 5px 5px 0; border-left: 0; }
.filter-row { height: 44px; flex: none; background: #e3e8fc; border-bottom: 1px solid #bdcbfa; display: flex; align-items: center; padding-left: 11px; font-size: 20px; }
.filter-label { color: #333; }
.filter-input { width: 352px; height: 34px; margin-left: 5px; border: 1px solid #aaa; border-top-color: #888; background: #fff; padding: 0; }
.history-wrap { flex: 1; min-height: 0; display: flex; overflow: hidden; }
.history { list-style: none; margin: -13px 0 0; padding: 0; width: 423px; flex: none; font-size: 19.5px; line-height: 23px; }
.h { display: flex; padding: 10px 8px 11px 0; border-bottom: 1px dotted #c4c4c4; background: #fff; color: #333; }
.n { width: 45px; flex: none; text-align: right; font-size: 16px; line-height: 20px; padding-top: 3px; color: #444; }
.t { margin-left: 10.5px; }
.h-now { background: #6b84e6; color: #fff; border-bottom-color: #e3e8fc; }
.h-now .n { color: #fff; }
.h-redo { background: #e3e8fc; color: #999; }
.h-redo .n { color: #999; }
.vscroll { background: #f0f0f0; position: relative; flex: 1; }
.vscroll i { display: block; position: absolute; }
.arrow-up { width: 0; height: 0; left: 7px; top: 10px; border: 6px solid transparent; border-bottom: 7px solid #505050; border-top: 0; }
.arrow-down { width: 0; height: 0; left: 7px; bottom: 9px; border: 6px solid transparent; border-top: 7px solid #505050; border-bottom: 0; }
.arrow-light { border-bottom-color: #a8a8a8; }
.thumb { background: #c1c1c1; left: 2px; right: 2px; }
.thumb-left { top: 69px; height: 54px; }
.thumb-right { top: 26px; height: 25px; left: 3px; }
.status-bubble { position: absolute; left: -1px; bottom: 0; height: 33px; width: 108px; background: #dee1e6; border-radius: 0 6px 0 0; font: 16px "Noto Sans", sans-serif; color: #333; padding: 6px 0 0 7px; }

.right { flex: 1; min-width: 0; display: flex; flex-direction: column; background: #bdcbfa; border-radius: 12px 0 0 0; }
.summary { height: 48px; flex: none; display: flex; align-items: center; padding: 0 15px 0 15px; }
.rows-count { font-size: 27px; margin: 1px 0 0; color: #111; }
.ext-label { margin-left: auto; font-size: 19.5px; color: #222; }
.btn-wiki { margin-left: 6px; }
.content { flex: 1; min-height: 0; margin-left: 9px; background: #f2f2f2; display: flex; flex-direction: column; }
.controls { height: 51px; flex: none; display: flex; align-items: flex-start; padding: 8px 16px 0 10px; font-size: 19.5px; color: #333; }
.ctl-label { line-height: 28px; }
.pill { height: 28px; line-height: 28px; border-radius: 5px; padding: 0 7px; background: #eaedf8; color: #2a2fd0; margin-left: 4px; }
.ctl-label + .pill { margin-left: 8px; }
.pill-on { background: #ececec; color: #111; font-weight: bold; }
.ctl-show { margin-left: 46px; }
.pill-n { padding: 0 5px; text-align: center; margin-left: 5.1px; }
.ctl-rows { margin-left: 8px; }
.page { height: 28px; line-height: 28px; margin-top: 2px; border-radius: 5px; background: #eaedf8; color: #2a2fd0; text-align: center; flex: none; }
.page-off { color: #aaa; }
.page-first { width: 77px; margin-left: auto; }
.page-prev { width: 116px; margin-left: 12px; }
.page-input { width: 60px; height: 29px; margin-left: 21px; border: 1px solid #555; border-radius: 4px; background: #fff; font: 19.5px "Liberation Sans", sans-serif; padding: 0 0 0 3px; color: #222; }
.page-next { width: 78px; margin-left: 21px; }
.page-last { width: 77px; margin-left: 13px; }
.grid-wrap { flex: 1; min-height: 0; display: flex; overflow: hidden; }
.grid { width: 1436px; flex: none; table-layout: fixed; border-collapse: separate; border-spacing: 0; font-size: 16.25px; line-height: 18px; align-self: flex-start; }
.c-star { width: 40px; } .c-flag { width: 39px; } .c-num { width: 57px; } .c-race { width: 88px; } .c-name { width: 208px; } .c-title { width: 80px; } .c-mar { width: 108px; } .c-job { width: 105px; } .c-co { width: 279px; } .c-hou { width: 178px; } .c-res { width: 254px; }
.grid th { height: 44px; background: #e8ebf6; border-top: 1px solid #bdcbfa; border-right: 1px solid #bdcbfa; border-bottom: 3px solid #bdcbfa; text-align: left; padding: 2px 0 0 6.5px; color: #111; white-space: nowrap; font-size: 16.5px; }
.dd { display: inline-block; width: 25px; height: 25px; background: #fff; border: 2px solid #c8d4fb; border-radius: 5px; vertical-align: middle; margin-right: 7px; position: relative; }
.dd::after { content: ""; position: absolute; left: 4px; top: 7px; border: 6.5px solid transparent; border-top: 8px solid #1a0fc8; border-bottom: 0; }
.grid td { height: 31px; padding: 3px 7px 6px 8px; border-right: 1px solid #d9d9d9; border-bottom: 1px dotted #c8c8c8; color: #333; vertical-align: top; background: #fff; }
.grid td.hou { padding-right: 16px; }
.grid tbody tr:nth-child(odd) td { background: #f2f2f2; }
.grid td.ic { padding: 3px 0 0 7px; }
.grid td.ic2 { padding-left: 8px; border-right-width: 2px; }
.star { display: block; width: 23px; height: 23px; }
.flag { display: block; width: 22px; height: 23px; }
.vscroll-right { flex: 1; }

/* taskbar */
.taskbar { height: 72px; flex: none; background: #1c1e20; border-top: 2px solid #3b3e41; display: flex; align-items: center; color: #fff; font-family: "Noto Sans", sans-serif; }
.weather { width: 296px; flex: none; display: flex; align-items: center; padding-left: 32px; }
.weather-text { display: flex; flex-direction: column; margin-left: 12px; font-size: 17px; line-height: 24px; }
.cond { color: #d8d8d8; }
.start { flex: none; }
.search { width: 326px; height: 44px; margin-left: 21px; flex: none; background: #f3f3f3; border-radius: 22px; display: flex; align-items: center; padding: 0 6px 0 16px; color: #555; }
.search-text { font-size: 19px; margin-left: 14px; flex: 1; }
.bing { flex: none; }
.tb-apps { display: flex; margin-left: 5px; flex: none; }
.tb { width: 66px; height: 70px; display: flex; align-items: center; justify-content: center; position: relative; }
.tb-active::before { content: ""; position: absolute; left: 3px; right: 3px; top: 5px; bottom: 5px; background: #2a2d30; border-radius: 6px; }
.tb-active svg { position: relative; }
.tb-active::after { content: ""; position: absolute; left: 21px; width: 24px; bottom: 3px; height: 5px; border-radius: 3px; background: #b9b9b9; }
.tb-run::after { content: ""; position: absolute; left: 29px; width: 8px; bottom: 3px; height: 5px; border-radius: 3px; background: #8a8a8a; }
.badge { position: absolute; left: 23px; top: 9px; width: 40px; height: 24px; border-radius: 10px; background: #b5b5b5; color: #111; font-size: 16px; line-height: 24px; text-align: center; }
.e-badge { position: absolute; left: 35px; top: 9px; width: 24px; height: 24px; border-radius: 50%; background: #a642b8; color: #e8c8f0; font-size: 13px; line-height: 24px; text-align: center; }
.notion-n { font: bold 21px "Liberation Serif", serif; fill: #111; }
.tray { flex: 1; display: flex; align-items: center; padding: 0 29px 0 34px; gap: 12px; }
.tray-caret { flex: none; }
.eng { font-size: 17.5px; margin: 0 16px 0 16px; }
.clock { margin-left: auto; display: flex; flex-direction: column; text-align: right; font-size: 18px; line-height: 24px; }
```
